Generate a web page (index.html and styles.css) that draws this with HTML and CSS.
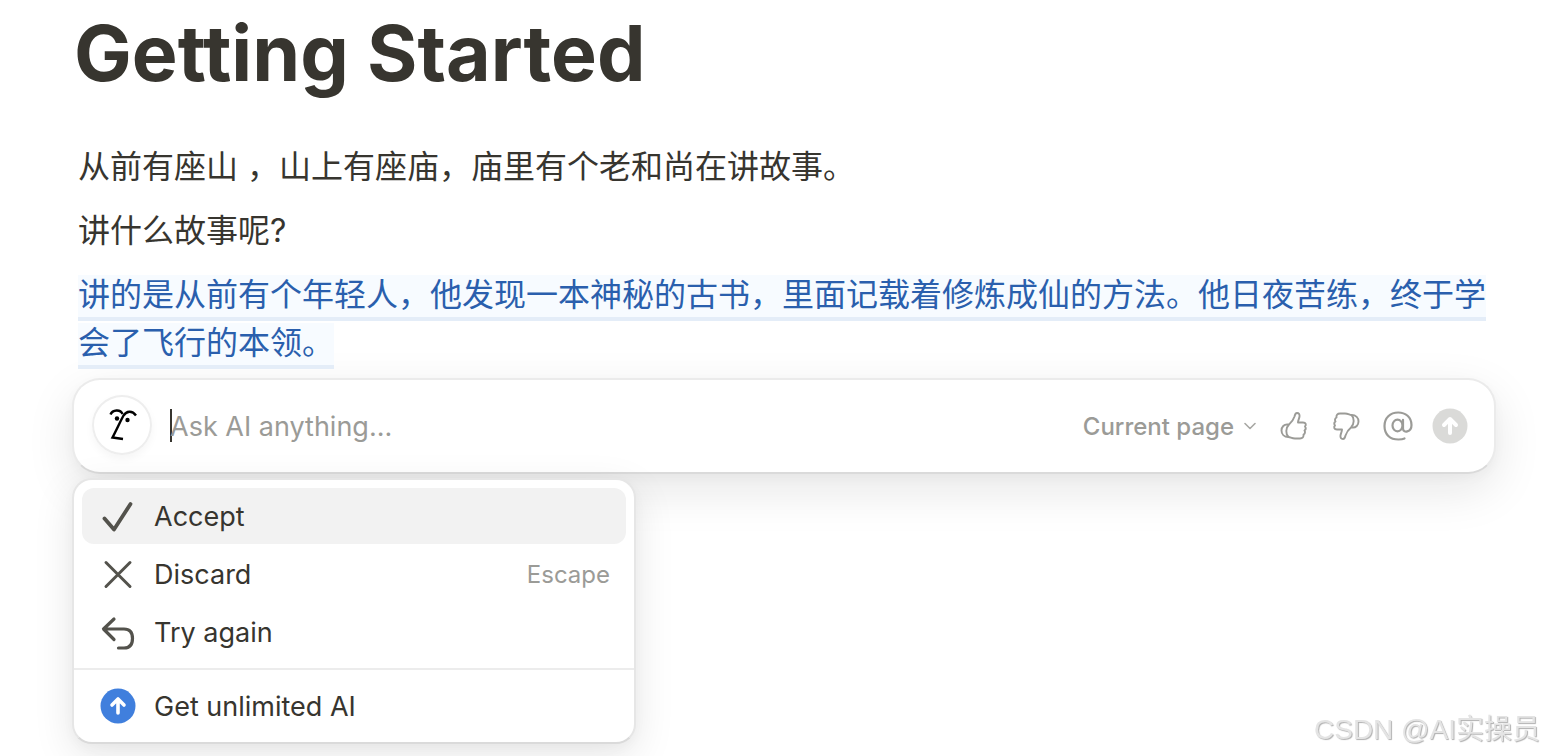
FILE: index.html
```html
<!DOCTYPE html>
<html lang="zh-CN">
<head>
    <meta charset="UTF-8">
    <meta name="viewport" content="width=device-width, initial-scale=1.0">
    <title>Getting Started</title>
    <link rel="stylesheet" href="styles.css">
</head>
<body>
<main class="page">
    <h1>Getting Started</h1>
    <div class="content">
        <p>从前有座山 ，山上有座庙，庙里有个老和尚在讲故事。</p>
        <p>讲什么故事呢?</p>
        <p><span class="ai-text">讲的是从前有个年轻人，他发现一本神秘的古书，里面记载着修炼成仙的方法。他日夜苦练，终于学会了飞行的本领。</span></p>
    </div>

    <form class="ai-bar">
        <span class="avatar">
            <svg width="60" height="60" viewBox="0 0 60 60" fill="none" stroke="#000" stroke-width="2.4">
                <path d="M18.500 19.500C20.500 14.500 28.500 14 30.500 19"/>
                <path d="M44 20.500C40 15 34.500 16 31.500 20.500C28.500 26 24 36 20.500 42.500L31 44"/>
                <circle cx="25" cy="23.500" r="2.200" fill="#000" stroke="none"/>
                <circle cx="35.500" cy="25" r="2.200" fill="#000" stroke="none"/>
            </svg>
        </span>
        <span class="caret"></span>
        <input type="text" class="ai-input" placeholder="Ask AI anything..." aria-label="Ask AI anything" autocomplete="off">
        <button type="button" class="scope-btn">
            Current page
            <svg width="12" height="8" viewBox="0 0 12 8" fill="none" stroke="#a8a8a4" stroke-width="1.6" stroke-linecap="round" stroke-linejoin="round"><path d="M1 1.500L6 6.500L11 1.500"/></svg>
        </button>
        <div class="actions">
            <button type="button" class="icon-btn" aria-label="Good response">
                <svg width="30" height="30" viewBox="0 0 30 30" fill="none" stroke="#9b9b97" stroke-width="1.900" stroke-linecap="round" stroke-linejoin="round">
                    <path d="M10 13.500C12.500 11.500 14.500 8.500 15.500 5.500C16 3 16.500 2 18 2C20 2 20.800 3.500 20.500 5.500C20.200 7.500 19 9.500 19 11.500H24C27 11.500 27.500 14 26 15.500C27 17 27 18.500 25.500 19.500C26.500 21 26 22.800 24.500 23.500C25 26 23.500 27.500 21 27.500H16C13 27.500 12 26.500 9.500 26C6.500 23 6.500 17 10 13.500Z"/>
                    <path d="M9 13.500C5 13 2.500 16 2.500 19.500C2.500 23 5 26 9.500 26"/>
                </svg>
            </button>
            <button type="button" class="icon-btn" aria-label="Bad response">
                <svg class="flip" width="30" height="30" viewBox="0 0 30 30" fill="none" stroke="#9b9b97" stroke-width="1.900" stroke-linecap="round" stroke-linejoin="round">
                    <path d="M10 13.500C12.500 11.500 14.500 8.500 15.500 5.500C16 3 16.500 2 18 2C20 2 20.800 3.500 20.500 5.500C20.200 7.500 19 9.500 19 11.500H24C27 11.500 27.500 14 26 15.500C27 17 27 18.500 25.500 19.500C26.500 21 26 22.800 24.500 23.500C25 26 23.500 27.500 21 27.500H16C13 27.500 12 26.500 9.500 26C6.500 23 6.500 17 10 13.500Z"/>
                    <path d="M9 13.500C5 13 2.500 16 2.500 19.500C2.500 23 5 26 9.500 26"/>
                </svg>
            </button>
            <button type="button" class="icon-btn" aria-label="Mention">
                <svg width="30" height="30" viewBox="0 0 30 30" fill="none" stroke="#9b9b97" stroke-width="2.200" stroke-linecap="round">
                    <ellipse cx="14.500" cy="14.500" rx="5" ry="5.800"/>
                    <path d="M20 8.800V17.500C20 22.500 28.500 21.500 28.500 14C28.500 6 22.500 1.500 15.200 1.500C7 1.500 1.500 7 1.500 15C1.500 23.500 7 28.500 15.500 28.500C18 28.500 20 28.200 21.500 27.500"/>
                </svg>
            </button>
            <button type="submit" class="icon-btn" aria-label="Send">
                <svg width="36" height="36" viewBox="0 0 36 36" fill="none" stroke="#fff" stroke-width="4" stroke-linecap="round" stroke-linejoin="round">
                    <circle cx="18" cy="18" r="17.500" fill="#dadad8" stroke="none"/>
                    <path d="M18 25V12M12 17L18 11L24 17"/>
                </svg>
            </button>
        </div>
    </form>

    <div class="menu">
        <button type="button" class="menu-item active">
            <svg width="36" height="36" viewBox="0 0 36 36" fill="none" stroke="#53524c" stroke-width="3.800" stroke-linecap="round" stroke-linejoin="round"><path d="M4.500 20.500L14 31.500L30.500 6"/></svg>
            <span>Accept</span>
        </button>
        <button type="button" class="menu-item">
            <svg width="36" height="36" viewBox="0 0 36 36" fill="none" stroke="#53524c" stroke-width="3" stroke-linecap="round"><path d="M6 6.500L30 30.500M30 6.500L6 30.500"/></svg>
            <span>Discard</span>
            <kbd>Escape</kbd>
        </button>
        <button type="button" class="menu-item">
            <svg width="36" height="36" viewBox="0 0 36 36" fill="none" stroke="#53524c" stroke-width="3.200" stroke-linecap="round" stroke-linejoin="round"><path d="M14 5L3.500 15L14 25.500M4 15H24C30 15 32.500 19 32.500 24.500C32.500 30 30 34 24 34H18.500"/></svg>
            <span>Try again</span>
        </button>
        <hr>
        <button type="button" class="menu-item">
            <svg width="36" height="36" viewBox="0 0 36 36" fill="none" stroke="#fff" stroke-width="3.600" stroke-linecap="round" stroke-linejoin="round">
                <circle cx="18" cy="18" r="17.500" fill="#407fdd" stroke="none"/>
                <path d="M18 25V11M12 17L18 11L24 17"/>
            </svg>
            <span>Get unlimited AI</span>
        </button>
    </div>
</main>

<div class="watermark">CSDN @AI实操员</div>
</body>
</html>
```

FILE: styles.css
```css
* {
    box-sizing: border-box;
}

body {
    margin: 0;
    background-color: #fff;
    color: #37352f;
    font-family: Inter, "Noto Sans CJK SC", sans-serif;
}

.page {
    padding: 5px 48px 12px 72px;
}

h1 {
    margin: 0;
    padding-left: 2px;
    font-size: 77px;
    line-height: 96px;
    font-weight: 700;
}

.content {
    padding: 34px 0 0 6px;
}

p {
    margin: 0;
    padding: 8px 0;
    font-size: 32px;
    line-height: 48px;
}

.ai-text {
    color: #2a5fad;
    background-color: #f7fbff;
    border-bottom: 4px solid #e4edf8;
    padding-bottom: 3px;
}

.ai-bar {
    display: flex;
    align-items: center;
    height: 96px;
    margin-top: 3px;
    padding: 0 28px 2px 18px;
    background-color: #fff;
    border: 2px solid #ebebeb;
    border-bottom-color: #dadada;
    border-radius: 28px;
    box-shadow: 0 16px 48px rgba(15, 15, 15, 0.1), 0 4px 12px rgba(15, 15, 15, 0.03);
}

.avatar {
    display: flex;
    width: 60px;
    height: 60px;
    border-radius: 50%;
    box-shadow: inset 0 0 0 2px #eeeeee, 0 4px 8px rgba(15, 15, 15, 0.04);
}

/* sits over the left edge of the input */
.caret {
    width: 2px;
    height: 33px;
    margin-left: 18px;
    margin-right: -2px;
    background-color: #37352f;
}

.ai-input {
    flex: 1;
    min-width: 0;
    padding: 2px 0 0;
    border: none;
    outline: none;
    background: none;
    font-family: inherit;
    font-size: 27px;
}

.ai-input::placeholder {
    color: #9b9b97;
}

button {
    border: none;
    background: none;
    padding: 0;
    color: inherit;
    font-family: inherit;
    cursor: pointer;
}

.scope-btn {
    display: flex;
    align-items: center;
    gap: 10px;
    padding-top: 2px;
    color: #9b9b97;
    font-size: 24px;
    font-weight: 500;
}

.actions {
    display: flex;
    align-items: center;
    gap: 20px;
    margin-left: 22px;
    padding-top: 2px;
}

.icon-btn {
    display: flex;
    justify-content: center;
    width: 32px;
}

.icon-btn svg {
    flex-shrink: 0;
}

.flip {
    transform: rotate(180deg);
}

.menu {
    position: relative;
    width: 564px;
    margin-top: 4px;
    padding: 8px;
    background-color: #fff;
    border: 2px solid #e6e6e6;
    border-bottom-color: #dadada;
    border-radius: 20px;
    box-shadow: 0 12px 40px rgba(15, 15, 15, 0.1), 0 4px 12px rgba(15, 15, 15, 0.03);
}

.menu-item {
    display: flex;
    align-items: center;
    gap: 18px;
    width: 100%;
    height: 56px;
    margin-bottom: 2px;
    padding: 0 16px 0 18px;
    border-radius: 12px;
    font-size: 27px;
    text-align: left;
}

.menu-item:last-child {
    margin-bottom: 0;
}

.menu-item.active {
    background-color: #f2f2f2;
}

.menu-item kbd {
    margin-left: auto;
    color: #9b9b97;
    font-family: inherit;
    font-size: 24px;
}

hr {
    height: 2px;
    margin: 8px -8px;
    border: none;
    background-color: #ececec;
}

.watermark {
    position: fixed;
    right: 4px;
    bottom: 6px;
    color: #e4e4e4;
    font-family: "Liberation Sans", "Noto Sans CJK SC", sans-serif;
    font-size: 28px;
    line-height: 40px;
    text-shadow: 1px 1px 1px #b0b0b0;
}
```
